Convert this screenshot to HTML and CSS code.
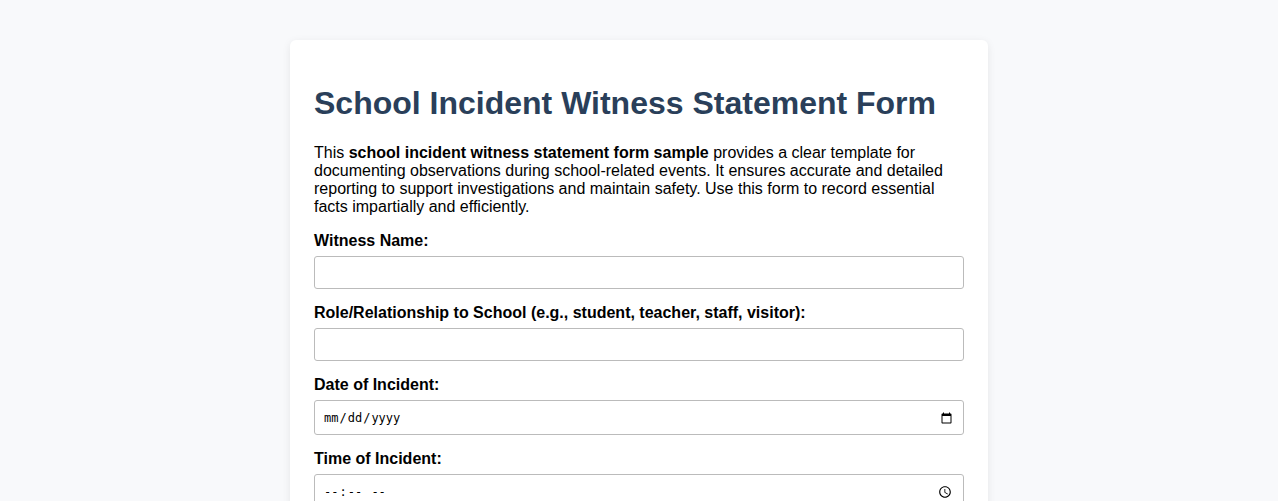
FILE: index.html
```html
<!DOCTYPE html>
<html lang="en">
<head>
<meta charset="UTF-8">
<meta name="viewport" content="width=device-width, initial-scale=1.0">
<title>School Incident Witness Statement Form</title>
<link rel="stylesheet" href="styles.css">
</head>
<body>
<div class="container">
  <h1>School Incident Witness Statement Form</h1>
  <p>This <strong>school incident witness statement form sample</strong> provides a clear template for documenting observations during school-related events. It ensures accurate and detailed reporting to support investigations and maintain safety. Use this form to record essential facts impartially and efficiently.</p>
  <form>
    <label for="witness-name">Witness Name:</label>
    <input type="text" id="witness-name" name="witness-name">

    <label for="role">Role/Relationship to School (e.g., student, teacher, staff, visitor):</label>
    <input type="text" id="role" name="role">

    <label for="incident-date">Date of Incident:</label>
    <input type="date" id="incident-date" name="incident-date">

    <label for="incident-time">Time of Incident:</label>
    <input type="time" id="incident-time" name="incident-time">
  </form>
</div>
</body>
</html>
```
FILE: styles.css
```css
body {
  font-family: "Liberation Sans", Arial, sans-serif;
  background: #f8f9fb;
  margin: 0;
  padding: 0;
}
.container {
  background: #fff;
  max-width: 650px;
  margin: 40px auto;
  padding: 24px;
  border-radius: 6px;
  box-shadow: 0 2px 8px rgba(0, 0, 0, 0.08);
}
h1 {
  color: #2a3f5a;
}
label {
  display: block;
  font-weight: bold;
  margin-top: 15px;
}
input {
  width: 100%;
  padding: 8px;
  margin-top: 6px;
  border: 1px solid #bbb;
  border-radius: 3px;
  box-sizing: border-box;
}
input[type="date"],
input[type="time"] {
  height: 35px;
  padding: 9px 8px 7px;
}
::-webkit-datetime-edit {
  font-family: "DejaVu Sans Mono", monospace;
  font-size: 12px;
}
```
